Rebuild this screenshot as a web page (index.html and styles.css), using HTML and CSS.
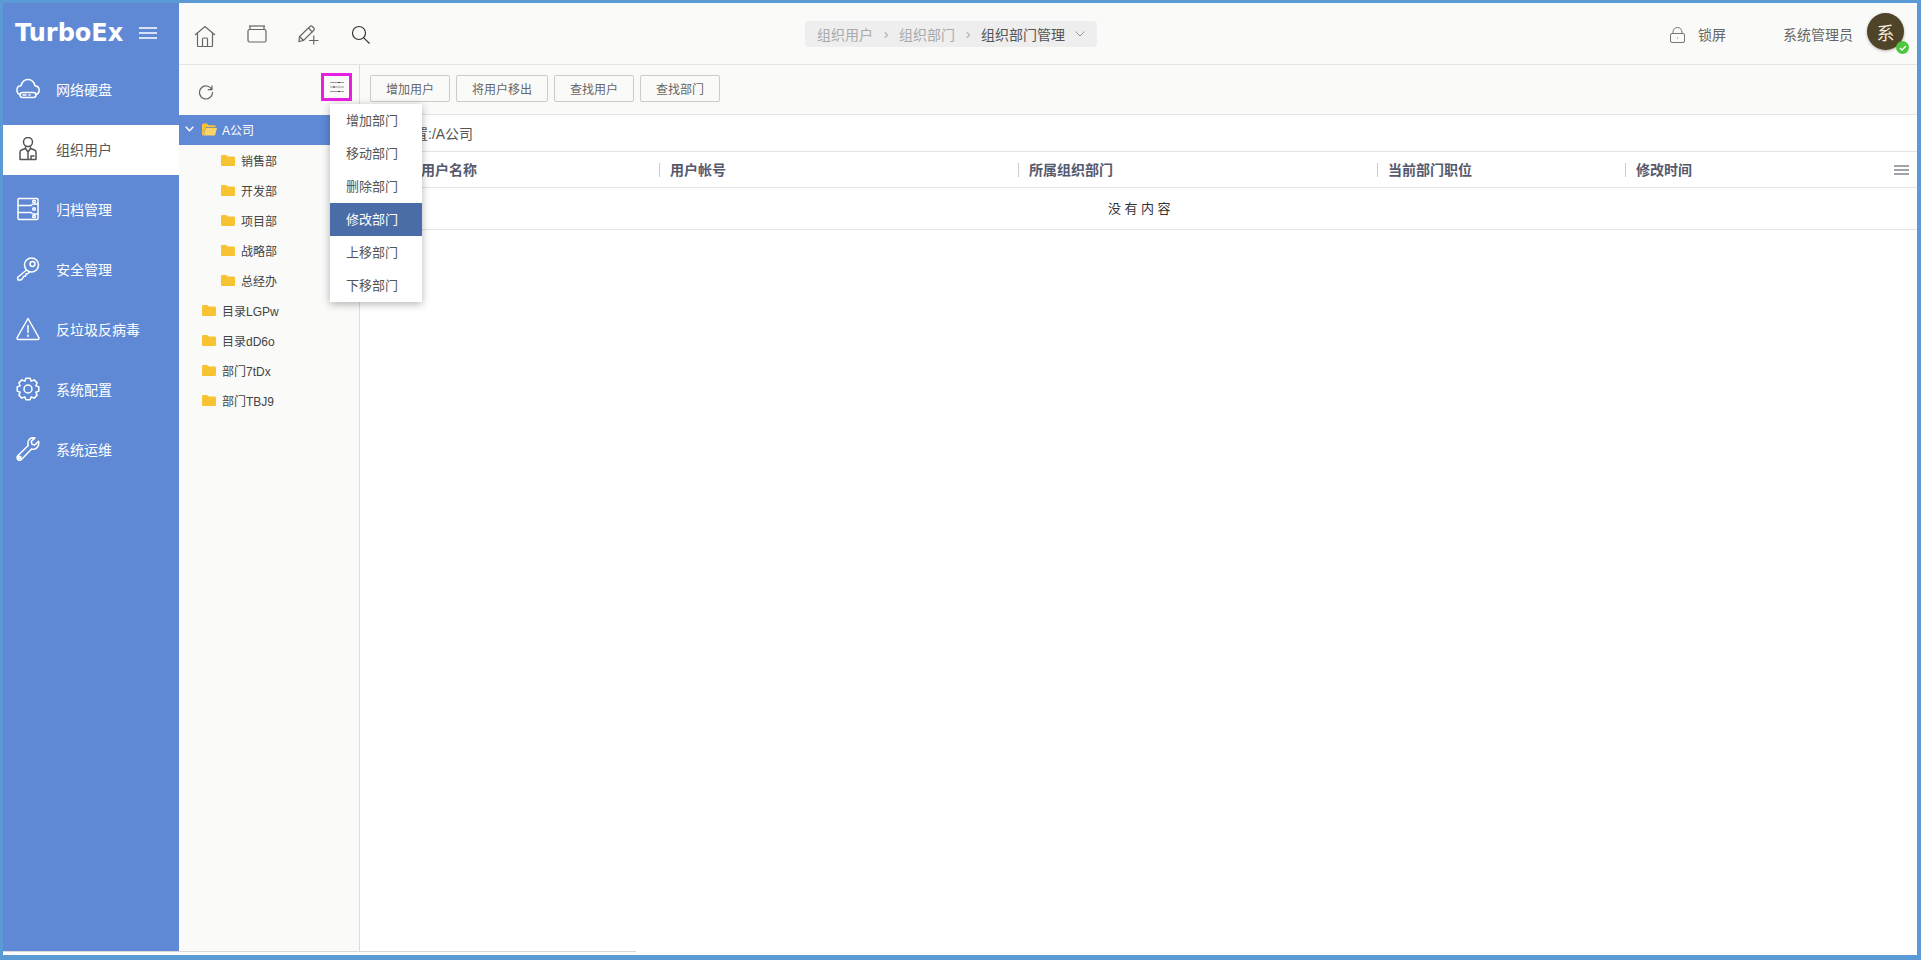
FILE: index.html
```html
<!DOCTYPE html>
<html lang="zh-CN">
<head>
    <meta charset="UTF-8">
    <title>TurboEx</title>
    <link rel="stylesheet" href="styles.css">
</head>
<body>
    <svg class="sprites" width="0" height="0">
        <symbol id="folder" viewBox="0 0 15 13">
            <path d="M0 2a1.500 1.500 0 0 1 1.500-1.500h3.600c.6 0 1 .3 1.300.7l.8 1h6.300a1.500 1.500 0 0 1 1.500 1.500v7.300a1.500 1.500 0 0 1-1.500 1.500h-12a1.500 1.500 0 0 1-1.500-1.500z" fill="#f7c333"/>
        </symbol>
    </svg>

    <div class="frame">
        <div class="app">
            <aside class="sidebar">
                <div class="logo">
                    <span class="logo-text">TurboEx</span>
                    <svg class="logo-menu" width="18" height="12" viewBox="0 0 18 12"><path d="M0 1h18M0 6h18M0 11h18" stroke="#fff" stroke-width="1.500"/></svg>
                </div>
                <nav class="nav">
                    <a class="nav-item">
                        <svg class="nav-icon" viewBox="0 0 24 24"><path d="M4 17.500C1.800 16.800.8 14.800 1 12.500c.2-2.200 2-3.700 4-3.700C6 4.800 9 2.500 12 2.500c3.500 0 6 2.500 7 6.300 2.500.3 4.200 2 4.200 4.500 0 1.800-1 3.500-2.700 4.200"/><rect x="4" y="15.500" width="16" height="5" rx="2.500"/><path d="M7 18h3M13 18h1"/></svg>
                        <span>网络硬盘</span>
                    </a>
                    <a class="nav-item active">
                        <svg class="nav-icon" viewBox="0 0 24 24"><circle cx="12" cy="5" r="4.500"/><path d="M9.500 10v1.500L5.500 13c-1 .4-1.500 1.200-1.500 2.200V22.500h16V15.200c0-1-.5-1.800-1.500-2.200L14.500 11.500V10M9.500 11.500L12 15l2.500-3.500M12 15v7.500M15 22.500v-3.500h3"/></svg>
                        <span>组织用户</span>
                    </a>
                    <a class="nav-item">
                        <svg class="nav-icon" viewBox="0 0 24 24"><rect x="2" y="1.500" width="20" height="21" rx="1"/><path d="M2 8.500h13l2-1.500h5M2 15.500h13l2 1.500h5"/><circle cx="18" cy="4.500" r="1.300"/><circle cx="18" cy="12" r="1.300"/><circle cx="18" cy="19.500" r="1.300"/></svg>
                        <span>归档管理</span>
                    </a>
                    <a class="nav-item">
                        <svg class="nav-icon" viewBox="0 0 24 24"><circle cx="15.500" cy="8" r="7"/><circle cx="16.500" cy="7" r="2.500"/><path d="M10.500 13L1.500 20.500l.5 2.500h3l1.500-1.500 1-2 2-.5.500-2 2-.5 1.500-1.500"/></svg>
                        <span>安全管理</span>
                    </a>
                    <a class="nav-item">
                        <svg class="nav-icon" viewBox="0 0 24 24"><path d="M12 1.500L1.200 20.500c-.5 1 0 2 1.200 2h19.200c1.200 0 1.700-1 1.200-2z"/><path d="M12 8.500v7M12 18v1.500"/></svg>
                        <span>反垃圾反病毒</span>
                    </a>
                    <a class="nav-item">
                        <svg class="nav-icon" viewBox="0 0 24 24"><path d="M9.900 1.200L14.100 1.200L15.250 4.150L18.150 2.880L21.120 5.850L19.850 8.750L22.800 9.900V14.100L19.850 15.250L21.120 18.150L18.150 21.120L15.250 19.850L14.100 22.800H9.900L8.750 19.850L5.850 21.120L2.880 18.150L4.150 15.250L1.200 14.100V9.900L4.150 8.750L2.880 5.850L5.850 2.880L8.750 4.150Z"/><circle cx="12" cy="12" r="4"/></svg>
                        <span>系统配置</span>
                    </a>
                    <a class="nav-item">
                        <svg class="nav-icon" viewBox="0 0 24 24"><path d="M22.600 4.200L18.800 8L16 7.200L15.200 4.400L19 .9C15.500 0 12 2.200 11.800 6C11.800 7 12 7.800 12.300 8.500L2 18.500C.6 20 .8 21.800 1.800 22.600C3 23.600 4.600 23.400 5.700 22.300L15.600 12C16.500 12.300 17.400 12.400 18.300 12.200C21.500 11.700 23.400 8 22.600 4.200Z"/><circle cx="3.700" cy="20.500" r="1.200"/></svg>
                        <span>系统运维</span>
                    </a>
                </nav>
            </aside>

            <div class="content">
                <header class="topbar">
                    <div class="quick-icons">
                        <span class="quick-icon">
                            <svg width="22" height="22" viewBox="0 0 22 22"><path d="M1 10L11 1.500 21 10M3.500 8.500V20.500a1 1 0 0 0 1 1h13a1 1 0 0 0 1-1V8.500M8.500 21.500V14a1 1 0 0 1 1-1h3a1 1 0 0 1 1 1v7.500"/></svg>
                        </span>
                        <span class="quick-icon">
                            <svg width="20" height="18" viewBox="0 0 20 18"><path d="M2 1h16"/><rect x="1" y="4.500" width="18" height="12.500" rx="1.500"/><path d="M3 1v3.500M17 1v3.500"/></svg>
                        </span>
                        <span class="quick-icon">
                            <svg width="22" height="20" viewBox="0 0 22 20"><path d="M1 16.500l.5-5L12 1.500c.8-.7 1.600-.7 2.300 0l1.500 1.500c.7.7.7 1.500 0 2.300L5.500 15.500zM1.500 11.500l4 4M10.500 3l4.300 4.300M11 15.500h9.500M15.750 10.500v9"/></svg>
                        </span>
                        <span class="quick-icon">
                            <svg width="20" height="20" viewBox="0 0 20 20"><circle cx="8" cy="8" r="6.500" stroke="#333"/><path d="M12.800 12.800L18.500 18.500" stroke="#333"/></svg>
                        </span>
                    </div>
                    <div class="breadcrumb">
                        <span class="crumb">组织用户</span>
                        <span class="crumb-sep">›</span>
                        <span class="crumb">组织部门</span>
                        <span class="crumb-sep">›</span>
                        <span class="crumb-current">组织部门管理</span>
                        <svg class="crumb-arrow" width="10" height="6" viewBox="0 0 10 6"><path d="M.5.5L5 5 9.500.5"/></svg>
                    </div>
                    <div class="user-area">
                        <svg class="lock-icon" width="15" height="16" viewBox="0 0 15 16"><rect x=".5" y="6.500" width="14" height="9" rx="1.500"/><path d="M3 6.500V5a4.500 4.500 0 0 1 9 0v1.500"/><path d="M7.500 10.500v1"/></svg>
                        <span class="lock-text">锁屏</span>
                        <span class="user-name">系统管理员</span>
                        <span class="avatar">系
                            <span class="avatar-badge">
                                <svg width="8" height="8" viewBox="0 0 8 8"><path d="M1 4l2 2 4-4" fill="none" stroke="#fff" stroke-width="1.300"/></svg>
                            </span>
                        </span>
                    </div>
                </header>

                <div class="workspace">
                    <div class="tree-panel">
                        <div class="tree-head">
                            <svg class="refresh-icon" width="16" height="16" viewBox="0 0 16 16"><path d="M13.800 5.500A6.500 6.500 0 1 0 14.500 8M14 1.500v4.200H9.800"/></svg>
                            <span class="tree-tool">
                                <svg width="14" height="12" viewBox="0 0 14 12"><path d="M0 1.500h14M0 6h14M0 10.500h14" stroke="#999"/><path d="M8 1.500h2M3 6h2M8 10.500h2" stroke="#444"/></svg>
                            </span>
                        </div>
                        <ul class="tree">
                            <li class="tree-row selected">
                                <svg class="tree-caret" width="9" height="6" viewBox="0 0 9 6"><path d="M.7.7L4.500 4.700 8.300.7"/></svg>
                                <svg class="tree-folder" width="15" height="13" viewBox="0 0 15 13"><path d="M0 2a1.500 1.500 0 0 1 1.500-1.500h3.600l1.500 1.700h6a1 1 0 0 1 1 1v1H3.500L1.500 12.500H1.200A1.200 1.200 0 0 1 0 11.300z" fill="#f7c333"/><path d="M3.700 5h11.300l-2 7.500H1.700z" fill="#fbd466"/></svg>
                                <span>A公司</span>
                            </li>
                            <li class="tree-row child"><svg class="tree-folder" width="14" height="13"><use href="#folder"/></svg><span>销售部</span></li>
                            <li class="tree-row child"><svg class="tree-folder" width="14" height="13"><use href="#folder"/></svg><span>开发部</span></li>
                            <li class="tree-row child"><svg class="tree-folder" width="14" height="13"><use href="#folder"/></svg><span>项目部</span></li>
                            <li class="tree-row child"><svg class="tree-folder" width="14" height="13"><use href="#folder"/></svg><span>战略部</span></li>
                            <li class="tree-row child"><svg class="tree-folder" width="14" height="13"><use href="#folder"/></svg><span>总经办</span></li>
                            <li class="tree-row root"><svg class="tree-folder" width="14" height="13"><use href="#folder"/></svg><span>目录LGPw</span></li>
                            <li class="tree-row root"><svg class="tree-folder" width="14" height="13"><use href="#folder"/></svg><span>目录dD6o</span></li>
                            <li class="tree-row root"><svg class="tree-folder" width="14" height="13"><use href="#folder"/></svg><span>部门7tDx</span></li>
                            <li class="tree-row root"><svg class="tree-folder" width="14" height="13"><use href="#folder"/></svg><span>部门TBJ9</span></li>
                        </ul>
                    </div>

                    <div class="main">
                        <div class="toolbar">
                            <button class="tool-button">增加用户</button>
                            <button class="tool-button">将用户移出</button>
                            <button class="tool-button">查找用户</button>
                            <button class="tool-button">查找部门</button>
                        </div>
                        <div class="path-row">当前位置:/A公司</div>
                        <div class="table-head">
                            <div class="col col-name">用户名称</div>
                            <div class="col">用户帐号</div>
                            <div class="col">所属组织部门</div>
                            <div class="col">当前部门职位</div>
                            <div class="col col-last">
                                修改时间
                                <svg width="15" height="10" viewBox="0 0 15 10"><path d="M0 1h15M0 5h15M0 9h15" stroke="#84848f" stroke-width="1.300"/></svg>
                            </div>
                        </div>
                        <div class="empty-row">没有内容</div>
                    </div>

                    <ul class="dept-menu">
                        <li>增加部门</li>
                        <li>移动部门</li>
                        <li>删除部门</li>
                        <li class="active">修改部门</li>
                        <li>上移部门</li>
                        <li>下移部门</li>
                    </ul>
                </div>
            </div>
        </div>
        <div class="scroll-strip"></div>
    </div>
</body>
</html>
```

FILE: styles.css
```css
:root {
    --frame-blue: #5b9bd5;
    --side-blue: #5f89d5;
    --panel-bg: #fafaf8;
    --line: #e4e4e4;
    --text-color: #555;
}

* {
    box-sizing: border-box;
}

html, body {
    margin: 0;
    height: 100%;
    overflow: hidden;
}

body {
    font-family: "Liberation Sans", "Noto Sans CJK SC", sans-serif;
    font-size: 14px;
    color: var(--text-color);
    background: #fff;
}

.sprites {
    position: absolute;
}

.frame {
    height: 960px;
    display: flex;
    flex-direction: column;
    border-style: solid;
    border-color: var(--frame-blue);
    border-width: 3px 4px 5px 3px;
}

.app {
    flex: 1;
    min-height: 0;
    display: flex;
}

.scroll-strip {
    width: 633px;
    height: 4px;
    background: #fff;
    border-top: 1px solid #d8d8d8;
}

/* left menu */
.sidebar {
    width: 176px;
    flex-shrink: 0;
    background: var(--side-blue);
}

.logo {
    height: 62px;
    display: flex;
    align-items: center;
    justify-content: space-between;
    padding: 0 22px 3px 12px;
}

.logo-text {
    font-family: "DejaVu Sans", sans-serif;
    font-weight: bold;
    font-size: 24px;
    color: #fff;
}

.nav {
    display: flex;
    flex-direction: column;
    gap: 10px;
}

.nav-item {
    height: 50px;
    display: flex;
    align-items: center;
    gap: 17px;
    padding: 0 0 3px 13px;
    color: #fff;
}

.nav-item.active {
    background: #fff;
    color: var(--text-color);
}

.nav-icon {
    width: 24px;
    height: 24px;
    margin-right: -1px;
    fill: none;
    stroke: #fff;
    stroke-width: 1.500;
    stroke-linejoin: round;
    stroke-linecap: round;
}

.nav-item.active .nav-icon {
    stroke: #555;
}

/* top bar */
.content {
    flex: 1;
    min-width: 0;
    display: flex;
    flex-direction: column;
}

.topbar {
    height: 62px;
    flex-shrink: 0;
    display: flex;
    align-items: center;
    background: var(--panel-bg);
    border-bottom: 1px solid var(--line);
}

.quick-icons {
    display: flex;
}

.quick-icon {
    width: 52px;
    display: flex;
    justify-content: center;
    margin-top: 5px;
}

.quick-icon svg {
    fill: none;
    stroke: #666;
    stroke-width: 1.200;
}

.breadcrumb {
    height: 26px;
    margin-left: 418px;
    padding: 0 12px;
    display: flex;
    align-items: center;
    background: #eee;
    border-radius: 4px;
}

.crumb {
    color: #aaa;
}

.crumb-sep {
    width: 26px;
    text-align: center;
    color: #aaa;
}

.crumb-current {
    color: #555;
}

.crumb-arrow {
    margin-left: 10px;
    fill: none;
    stroke: #999;
}

.user-area {
    margin-left: auto;
    padding-right: 13px;
    display: flex;
    align-items: center;
}

.lock-icon {
    margin-top: 2px;
    fill: none;
    stroke: #777;
}

.lock-text {
    margin-left: 13px;
    color: #666;
}

.user-name {
    margin-left: 57px;
    color: #666;
}

.avatar {
    position: relative;
    width: 37px;
    height: 37px;
    margin-left: 14px;
    margin-top: -4px;
    display: flex;
    align-items: center;
    justify-content: center;
    border-radius: 50%;
    background: #4f4328;
    color: #f2ecdc;
    font-size: 18px;
    box-shadow: 0 1px 3px rgba(0,0,0,0.3);
}

.avatar-badge {
    position: absolute;
    right: -5px;
    bottom: -4px;
    width: 13px;
    height: 13px;
    display: flex;
    align-items: center;
    justify-content: center;
    border-radius: 50%;
    background: #4cc63c;
}

/* tree on the left of the workspace */
.workspace {
    flex: 1;
    min-height: 0;
    position: relative;
    display: flex;
}

.tree-panel {
    width: 181px;
    flex-shrink: 0;
    background: var(--panel-bg);
    border-right: 1px solid #ddd;
}

.tree-head {
    height: 50px;
    display: flex;
    justify-content: space-between;
    padding: 8px 7px 0 19px;
}

.refresh-icon {
    margin-top: 11px;
    fill: none;
    stroke: #666;
    stroke-width: 1.200;
}

.tree-tool {
    width: 31px;
    height: 28px;
    display: flex;
    align-items: center;
    justify-content: center;
    border: 3px solid #e81fe0;
}

.tree {
    list-style: none;
    margin: 0;
    padding: 0;
    font-size: 12px;
    color: #444;
}

.tree-row {
    height: 30px;
    display: flex;
    align-items: center;
    gap: 6px;
    padding-bottom: 2px;
}

.tree-row.selected {
    margin-bottom: 1px;
    padding-left: 6px;
    gap: 5px;
    background: var(--side-blue);
    color: #fff;
}

.tree-caret {
    margin-right: 3px;
    fill: none;
    stroke: #fff;
    stroke-width: 1.400;
}

.tree-row.child {
    padding-left: 42px;
}

.tree-row.root {
    padding-left: 23px;
}

/* user list */
.main {
    flex: 1;
    min-width: 0;
}

.toolbar {
    height: 50px;
    display: flex;
    gap: 6px;
    padding: 10px 0 0 10px;
    background: var(--panel-bg);
    border-bottom: 1px solid var(--line);
}

.tool-button {
    height: 27px;
    padding: 0 15px;
    font-family: inherit;
    font-size: 12px;
    color: #666;
    background: var(--panel-bg);
    border: 1px solid #ccc;
    border-radius: 2px;
}

.path-row {
    height: 37px;
    display: flex;
    align-items: center;
    padding-left: 12px;
    border-bottom: 1px solid var(--line);
}

.table-head {
    height: 36px;
    display: grid;
    grid-template-columns: 299px 359px 359px 248px 1fr;
    align-items: center;
    font-weight: bold;
    color: #555a6e;
    border-bottom: 1px solid var(--line);
}

.col {
    height: 14px;
    line-height: 14px;
    padding-left: 10px;
    border-left: 1px solid #ccc;
}

.col-name {
    padding-left: 61px;
    border-left: none;
}

.col-last {
    display: flex;
    justify-content: space-between;
    align-items: center;
    padding-right: 8px;
}

.empty-row {
    height: 42px;
    display: flex;
    align-items: center;
    justify-content: center;
    padding: 0 0 2px 5px;
    font-size: 13px;
    letter-spacing: 3.500px;
    color: #333;
    border-bottom: 1px solid var(--line);
}

/* dropdown under the tree tool */
.dept-menu {
    position: absolute;
    left: 151px;
    top: 39px;
    width: 92px;
    margin: 0;
    padding: 0;
    list-style: none;
    font-size: 13px;
    background: #fff;
    box-shadow: 0 2px 8px rgba(0,0,0,0.3);
}

.dept-menu li {
    height: 33px;
    line-height: 33px;
    padding-left: 16px;
}

.dept-menu li.active {
    background: #4a6da7;
    color: #fff;
}
```
